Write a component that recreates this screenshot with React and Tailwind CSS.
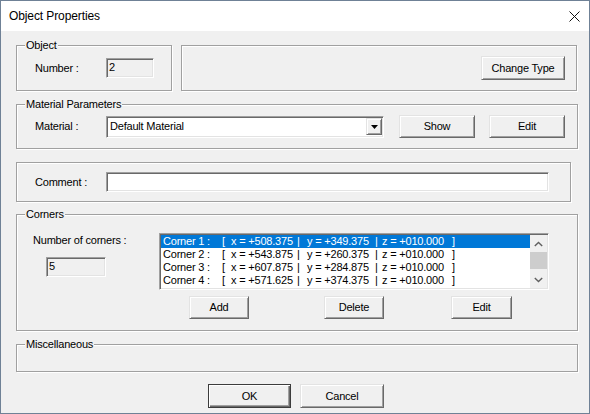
import React from 'react';

const GroupBox = ({ label, className = '', children }) => (
  <div className={`relative border border-[#a0a0a0] shadow-[inset_1px_1px_0_#fff,1px_1px_0_#fff] ${className}`}>
    {label && (
      <span className="absolute left-[8px] top-[-8px] bg-[#f0f0f0] px-px leading-[14px]">{label}</span>
    )}
    {children}
  </div>
);

const Field = ({ className = '', children }) => (
  <div className={`border border-t-[#a0a0a0] border-l-[#a0a0a0] border-r-white border-b-white shadow-[inset_1px_1px_0_#696969,inset_-1px_-1px_0_#e3e3e3] ${className}`}>
    {children}
  </div>
);

const Button = ({ className = '', isDefault, children }) => (
  <button
    className={`flex items-center justify-center border bg-[#f0f0f0] ${
      isDefault
        ? 'border-[#3c3c3c] shadow-[inset_1px_1px_0_#fff,inset_-1px_-1px_0_#696969,inset_-2px_-2px_0_#a0a0a0]'
        : 'border-t-[#e3e3e3] border-l-[#e3e3e3] border-r-[#696969] border-b-[#696969] shadow-[inset_1px_1px_0_#fff,inset_-1px_-1px_0_#a0a0a0]'
    } ${className}`}
  >
    {children}
  </button>
);

const corners = [
  { name: 'Corner 1 :', x: '+508.375', y: '+349.375', z: '+010.000' },
  { name: 'Corner 2 :', x: '+543.875', y: '+260.375', z: '+010.000' },
  { name: 'Corner 3 :', x: '+607.875', y: '+284.875', z: '+010.000' },
  { name: 'Corner 4 :', x: '+571.625', y: '+374.375', z: '+010.000' },
];

const Chevron = ({ down }) => (
  <svg width="9" height="6" viewBox="0 0 9 6">
    <polyline
      points={down ? '0.8,1 4.5,4.6 8.2,1' : '0.8,5 4.5,1.4 8.2,5'}
      fill="none"
      stroke="#606060"
      strokeWidth="1.4"
    />
  </svg>
);

const CornerList = () => (
  <Field className="w-[390px] h-[57px] bg-white p-px flex">
    <div className="flex-1 overflow-hidden">
      {corners.map((c, i) => (
        <div
          key={i}
          className={`flex h-[13px] leading-[13px] pl-[2px] whitespace-pre ${i === 0 ? 'bg-[#0078d7] text-white' : ''}`}
        >
          <span className="w-[59px]">{c.name}</span>
          <span className="w-[9px]">[</span>
          <span className="w-[66px]">x = {c.x}</span>
          <span className="w-[10px]">|</span>
          <span className="w-[68px]">y = {c.y}</span>
          <span className="w-[7px]">|</span>
          <span className="w-[70px]">z = {c.z}</span>
          <span>]</span>
        </div>
      ))}
    </div>
    <div className="w-[17px] bg-[#f0f0f0] flex flex-col">
      <div className="h-[17px] flex items-center justify-center"><Chevron /></div>
      <div className="h-[17px] bg-[#cdcdcd]" />
      <div className="flex-1" />
      <div className="h-[17px] flex items-center justify-center"><Chevron down /></div>
    </div>
  </Field>
);

export default function App() {
  return (
    <div className="w-[590px] h-[414px] border border-[#6f8196] flex flex-col font-['Liberation_Sans',Arial,sans-serif] text-[11px] tracking-[-0.2px] text-black bg-[#f0f0f0]">
      {/* Title bar */}
      <div className="h-[30px] bg-white flex items-center justify-between pl-[8px] pr-[9px]">
        <span className="text-[12px] tracking-[-0.1px]">Object Properties</span>
        <svg width="11" height="11" viewBox="0 0 11 11">
          <path d="M0.5 0.5 L10.5 10.5 M10.5 0.5 L0.5 10.5" stroke="#111" strokeWidth="1" />
        </svg>
      </div>

      {/* Body */}
      <div className="flex-1 pt-[14px] pl-[15px]">
        <div className="flex">
          <GroupBox label="Object" className="w-[156px] h-[46px] flex items-center pl-[18px]">
            <span className="w-[71px]">Number :</span>
            <Field className="w-[48px] h-[20px] pl-[2px] leading-[17px]">2</Field>
          </GroupBox>
          <GroupBox className="ml-[9px] w-[396px] h-[46px] flex items-center justify-end pr-[11px]">
            <Button className="w-[84px] h-[24px]">Change Type</Button>
          </GroupBox>
        </div>

        <GroupBox label="Material Parameters" className="mt-[13px] w-[562px] h-[45px] flex items-center pl-[18px]">
          <span className="w-[71px]">Material :</span>
          <Field className="w-[278px] h-[22px] bg-white flex items-center justify-between pl-[3px] pr-px">
            <span>Default Material</span>
            <div className="w-[16px] h-[17px] flex items-center justify-center border border-t-[#e3e3e3] border-l-[#e3e3e3] border-r-[#696969] border-b-[#696969] bg-[#f0f0f0] shadow-[inset_1px_1px_0_#fff,inset_-1px_-1px_0_#a0a0a0]">
              <svg width="7" height="4" viewBox="0 0 7 4">
                <polygon points="0,0 7,0 3.5,4" fill="#000" />
              </svg>
            </div>
          </Field>
          <Button className="ml-[15px] w-[76px] h-[23px]">Show</Button>
          <Button className="ml-[14px] w-[76px] h-[23px]">Edit</Button>
        </GroupBox>

        <GroupBox className="mt-[13px] w-[555px] h-[40px] flex items-center pl-[18px]">
          <span className="w-[71px]">Comment :</span>
          <Field className="w-[443px] h-[20px] bg-white" />
        </GroupBox>

        <GroupBox label="Corners" className="mt-[12px] w-[562px] h-[117px] flex pt-[18px]">
          <div className="w-[142px] pl-[16px]">
            <div className="leading-[13px] mt-px">Number of corners :</div>
            <Field className="ml-[13px] mt-[10px] w-[60px] h-[20px] pl-[2px] leading-[17px]">5</Field>
          </div>
          <div>
            <CornerList />
            <div className="flex mt-[6px]">
              <Button className="ml-[30px] w-[60px] h-[23px]">Add</Button>
              <Button className="ml-[75px] w-[60px] h-[23px]">Delete</Button>
              <Button className="ml-[67px] w-[61px] h-[23px]">Edit</Button>
            </div>
          </div>
        </GroupBox>

        <GroupBox label="Miscellaneous" className="mt-[13px] w-[562px] h-[28px]" />

        <div className="flex mt-[12px] ml-[192px]">
          <Button isDefault className="w-[83px] h-[24px]">OK</Button>
          <Button className="ml-[9px] w-[84px] h-[24px]">Cancel</Button>
        </div>
      </div>
    </div>
  );
}
